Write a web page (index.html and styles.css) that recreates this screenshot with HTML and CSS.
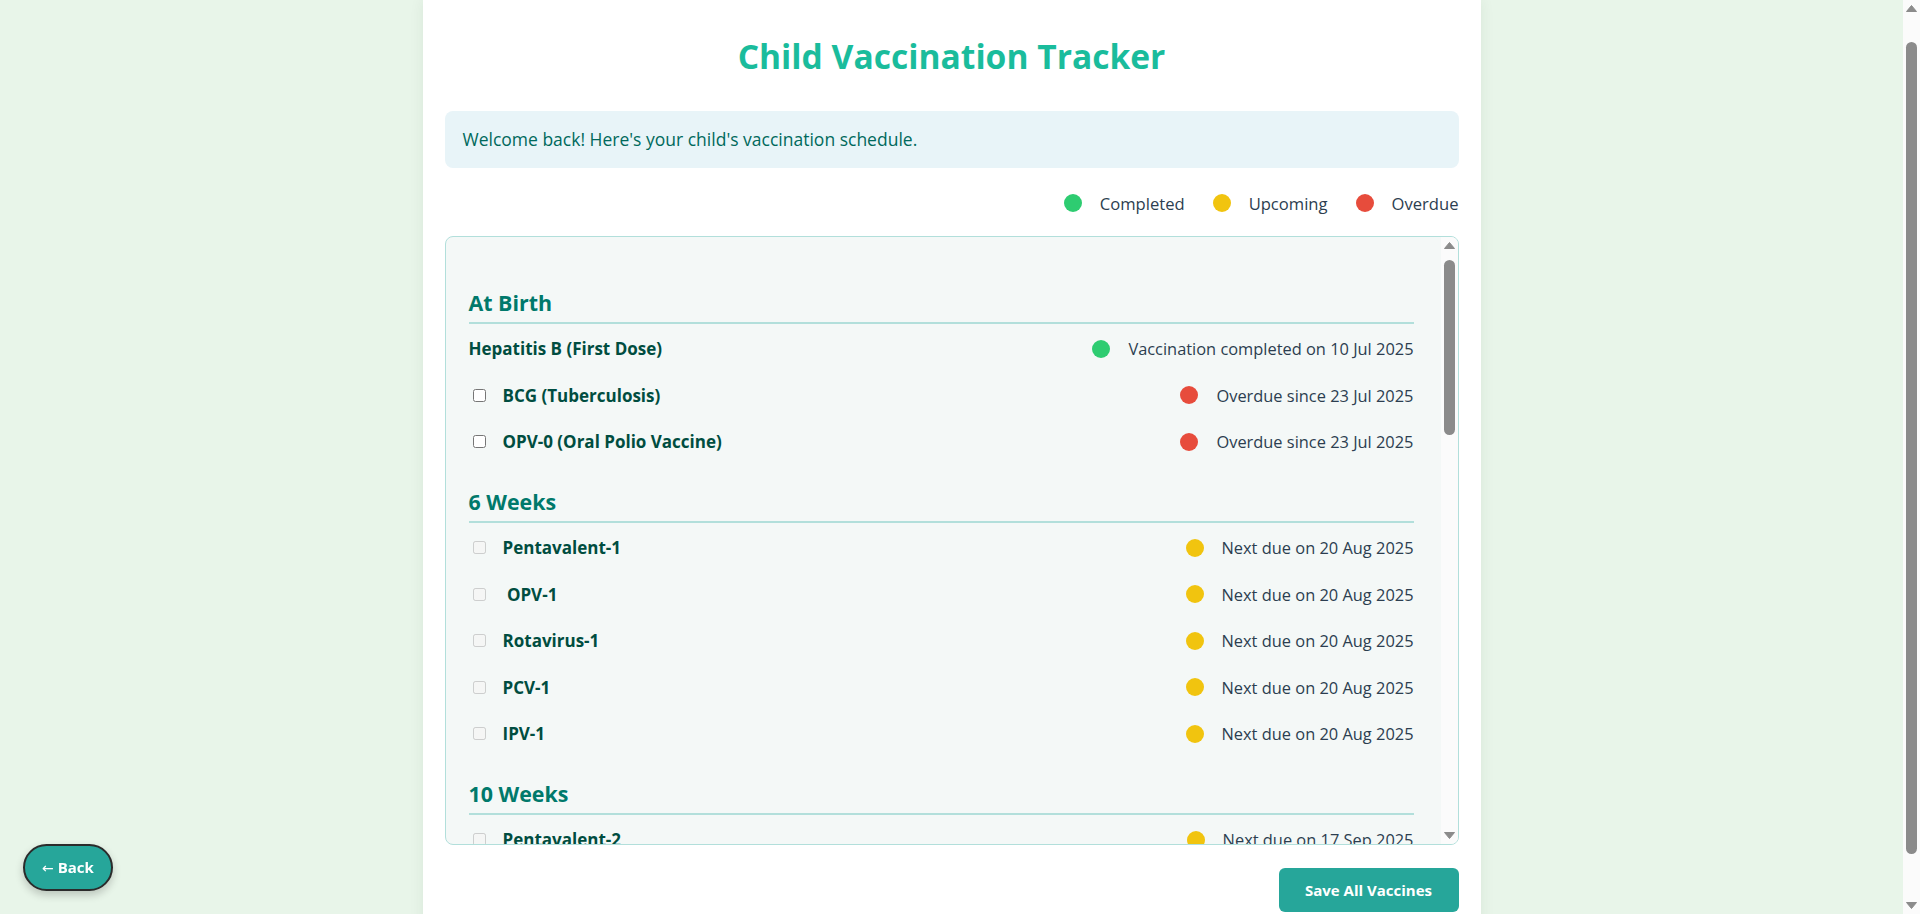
FILE: index.html
```html
<!DOCTYPE html>
<html lang="en">
<head>
<meta charset="utf-8">
<title>Child Vaccination Tracker</title>
<link rel="stylesheet" href="styles.css">
</head>
<body>
<div class="page">
  <h1 class="title">Child Vaccination Tracker</h1>
  <div class="welcome">Welcome back! Here's your child's vaccination schedule.</div>
  <div class="legend">
    <span class="legend-item"><span class="dot dot-green"></span>Completed</span>
    <span class="legend-item"><span class="dot dot-yellow"></span>Upcoming</span>
    <span class="legend-item"><span class="dot dot-red"></span>Overdue</span>
  </div>
  <div class="schedule">
    <div class="schedule-body">
      <section class="group">
        <h3 class="group-title">At Birth</h3>
        <div class="row">
          <span class="name">Hepatitis B (First Dose)</span>
          <span class="status"><span class="dot dot-green"></span>Vaccination completed on 10 Jul 2025</span>
        </div>
        <div class="row">
          <label class="name-wrap"><input type="checkbox" class="check"><span class="name">BCG (Tuberculosis)</span></label>
          <span class="status"><span class="dot dot-red"></span>Overdue since 23 Jul 2025</span>
        </div>
        <div class="row">
          <label class="name-wrap"><input type="checkbox" class="check"><span class="name">OPV-0 (Oral Polio Vaccine)</span></label>
          <span class="status"><span class="dot dot-red"></span>Overdue since 23 Jul 2025</span>
        </div>
      </section>
      <section class="group">
        <h3 class="group-title">6 Weeks</h3>
        <div class="row">
          <label class="name-wrap"><input type="checkbox" class="check" disabled><span class="name">Pentavalent-1</span></label>
          <span class="status"><span class="dot dot-yellow"></span>Next due on 20 Aug 2025</span>
        </div>
        <div class="row">
          <label class="name-wrap"><input type="checkbox" class="check" disabled><span class="name">&nbsp;OPV-1</span></label>
          <span class="status"><span class="dot dot-yellow"></span>Next due on 20 Aug 2025</span>
        </div>
        <div class="row">
          <label class="name-wrap"><input type="checkbox" class="check" disabled><span class="name">Rotavirus-1</span></label>
          <span class="status"><span class="dot dot-yellow"></span>Next due on 20 Aug 2025</span>
        </div>
        <div class="row">
          <label class="name-wrap"><input type="checkbox" class="check" disabled><span class="name">PCV-1</span></label>
          <span class="status"><span class="dot dot-yellow"></span>Next due on 20 Aug 2025</span>
        </div>
        <div class="row">
          <label class="name-wrap"><input type="checkbox" class="check" disabled><span class="name">IPV-1</span></label>
          <span class="status"><span class="dot dot-yellow"></span>Next due on 20 Aug 2025</span>
        </div>
      </section>
      <section class="group">
        <h3 class="group-title">10 Weeks</h3>
        <div class="row">
          <label class="name-wrap"><input type="checkbox" class="check" disabled><span class="name">Pentavalent-2</span></label>
          <span class="status"><span class="dot dot-yellow"></span>Next due on 17 Sep 2025</span>
        </div>
        <div class="row">
          <label class="name-wrap"><input type="checkbox" class="check" disabled><span class="name">OPV-2</span></label>
          <span class="status"><span class="dot dot-yellow"></span>Next due on 17 Sep 2025</span>
        </div>
        <div class="row">
          <label class="name-wrap"><input type="checkbox" class="check" disabled><span class="name">Rotavirus-2</span></label>
          <span class="status"><span class="dot dot-yellow"></span>Next due on 17 Sep 2025</span>
        </div>
      </section>
      <section class="group">
        <h3 class="group-title">14 Weeks</h3>
        <div class="row">
          <label class="name-wrap"><input type="checkbox" class="check" disabled><span class="name">Pentavalent-3</span></label>
          <span class="status"><span class="dot dot-yellow"></span>Next due on 15 Oct 2025</span>
        </div>
        <div class="row">
          <label class="name-wrap"><input type="checkbox" class="check" disabled><span class="name">OPV-3</span></label>
          <span class="status"><span class="dot dot-yellow"></span>Next due on 15 Oct 2025</span>
        </div>
        <div class="row">
          <label class="name-wrap"><input type="checkbox" class="check" disabled><span class="name">Rotavirus-3</span></label>
          <span class="status"><span class="dot dot-yellow"></span>Next due on 15 Oct 2025</span>
        </div>
      </section>
    </div>
    <div class="vscroll vscroll-inner" aria-hidden="true">
      <span class="vscroll-btn"><svg width="11" height="7" viewBox="0 0 11 7"><polygon points="5.5,0.5 10.5,6.5 0.5,6.5" fill="#8b8b8b" stroke="#8b8b8b" stroke-linejoin="round"/></svg></span>
      <span class="vscroll-track"><span class="vscroll-thumb inner-thumb"></span></span>
      <span class="vscroll-btn"><svg width="11" height="7" viewBox="0 0 11 7"><polygon points="0.5,0.5 10.5,0.5 5.5,6.5" fill="#8b8b8b" stroke="#8b8b8b" stroke-linejoin="round"/></svg></span>
    </div>
  </div>
  <div class="actions">
    <button type="button" class="save-btn">Save All Vaccines</button>
  </div>
</div>
<button type="button" class="back-btn"><span class="back-arrow">&larr;</span> Back</button>
<div class="vscroll page-scroll" aria-hidden="true">
  <span class="vscroll-btn"><svg width="11" height="7" viewBox="0 0 11 7"><polygon points="5.5,0.5 10.5,6.5 0.5,6.5" fill="#8b8b8b" stroke="#8b8b8b" stroke-linejoin="round"/></svg></span>
  <span class="vscroll-track"><span class="vscroll-thumb page-thumb"></span></span>
  <span class="vscroll-btn"><svg width="11" height="7" viewBox="0 0 11 7"><polygon points="0.5,0.5 10.5,0.5 5.5,6.5" fill="#8b8b8b" stroke="#8b8b8b" stroke-linejoin="round"/></svg></span>
</div>
</body>
</html>
```

FILE: styles.css
```css
* { box-sizing: border-box; }

html, body {
  margin: 0;
  padding: 0;
}

body {
  background: #e8f5e9;
  font-family: "Open Sans", "Liberation Sans", sans-serif;
  font-size: 16.5px;
  color: #2c3e50;
  padding-right: 17px;
  height: 914px;
  overflow: hidden;
}

.page {
  width: 1058px;
  margin: 0 auto;
  background: #ffffff;
  padding: 36px 22px 60px;
  box-shadow: 0 0 14px rgba(0, 60, 30, 0.07);
}

.title {
  margin: 0;
  text-align: center;
  color: #1abc9c;
  font-size: 33.6px;
  line-height: 40px;
  font-weight: 700;
}

.welcome {
  margin-top: 35px;
  background: #e8f4f8;
  border-radius: 8px;
  padding: 16px 18px;
  font-size: 17.5px;
  line-height: 25px;
  color: #00695c;
}

.legend {
  display: flex;
  justify-content: flex-end;
  align-items: center;
  gap: 28px;
  margin: 23px 0 21px;
  height: 24px;
  font-size: 16.6px;
}

.legend-item {
  display: flex;
  align-items: center;
  gap: 18px;
  color: #2c3e50;
}

.dot {
  width: 18px;
  height: 18px;
  border-radius: 50%;
  flex: none;
  display: inline-block;
}
.dot-green { background: #2ecc71; }
.dot-yellow { background: #f1c40f; }
.dot-red { background: #e74c3c; }

.schedule {
  display: flex;
  height: 609px;
  border: 1px solid #b2dfdb;
  border-radius: 8px;
  background: #f4f8f7;
  overflow: hidden;
}

.schedule-body {
  flex: 1;
  min-width: 0;
  overflow: hidden;
  padding: 28.75px 27px 24px 23px;
}

.group {
  margin-top: 22.75px;
}

.group-title {
  margin: 0 0 1.45px;
  color: #00796b;
  font-size: 21.4px;
  line-height: 28px;
  font-weight: 700;
  padding-bottom: 5.4px;
  border-bottom: 2px solid #b2dfdb;
}

.row {
  display: flex;
  justify-content: space-between;
  align-items: center;
  height: 46.5px;
}

.name-wrap {
  display: flex;
  align-items: center;
}

.check {
  margin: 3px 3px 3px 4px;
  width: 13px;
  height: 13px;
}

.name-wrap .name {
  margin-left: 14px;
}

.name {
  font-weight: 700;
  font-size: 17px;
  color: #004d40;
}

.status {
  display: flex;
  align-items: center;
  gap: 18px;
  font-size: 16.4px;
  color: #2c3e50;
}

.actions {
  display: flex;
  justify-content: flex-end;
  margin-top: 23px;
}

.save-btn {
  font-family: inherit;
  font-size: 15px;
  font-weight: 700;
  line-height: 20px;
  color: #ffffff;
  background: #26a69a;
  border: none;
  border-radius: 6px;
  padding: 12px 20px;
  width: 180px;
}

.back-btn {
  position: fixed;
  left: 23px;
  bottom: 23px;
  font-family: inherit;
  font-size: 15px;
  font-weight: 700;
  line-height: 22px;
  color: #ffffff;
  background: #26a69a;
  border: 2px solid #2b2b2b;
  border-radius: 25px;
  padding: 10px 17px;
  box-shadow: 0 4px 8px rgba(0, 0, 0, 0.2);
}

.back-arrow {
  font-family: "DejaVu Sans", sans-serif;
  font-weight: 400;
  font-size: 14px;
}

/* scrollbars drawn as elements */
.vscroll {
  display: flex;
  flex-direction: column;
  width: 17px;
  background: #fbfbfb;
}

.vscroll-inner {
  flex: none;
}

.page-scroll {
  position: fixed;
  top: 0;
  right: 0;
  height: 914px;
}

.vscroll-btn {
  flex: none;
  height: 17px;
  display: flex;
  align-items: center;
  justify-content: center;
}

.vscroll-track {
  flex: 1;
  display: flex;
  flex-direction: column;
  align-items: center;
}

.vscroll-thumb {
  width: 11px;
  background: #8b8b8b;
  border-radius: 6px;
}

.inner-thumb {
  margin-top: 6px;
  height: 175px;
}

.page-thumb {
  margin-top: 25px;
  height: 812px;
}
```
